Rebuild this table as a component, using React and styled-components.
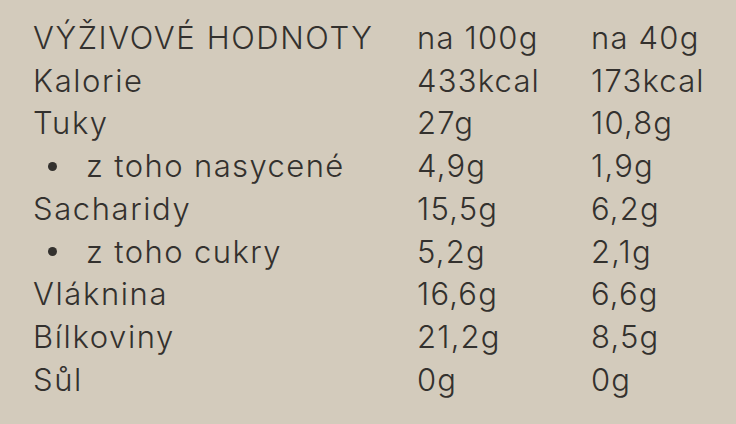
import React from 'react';
import styled, { createGlobalStyle } from 'styled-components';

const GlobalStyle = createGlobalStyle`
    html, body {
        margin: 0;
        padding: 0;
        background: #d3cbbc;
    }
`;

const rows = [
    { name: 'VÝŽIVOVÉ HODNOTY', per100: 'na 100g', perPortion: 'na 40g' },
    { name: 'Kalorie', per100: '433kcal', perPortion: '173kcal' },
    { name: 'Tuky', per100: '27g', perPortion: '10,8g' },
    { name: 'z toho nasycené', per100: '4,9g', perPortion: '1,9g', sub: true },
    { name: 'Sacharidy', per100: '15,5g', perPortion: '6,2g' },
    { name: 'z toho cukry', per100: '5,2g', perPortion: '2,1g', sub: true },
    { name: 'Vláknina', per100: '16,6g', perPortion: '6,6g' },
    { name: 'Bílkoviny', per100: '21,2g', perPortion: '8,5g' },
    { name: 'Sůl', per100: '0g', perPortion: '0g' },
];

const NutritionTable = () => {
    return (
        <TableStyled>
            {rows.map((row) => (
                <Row key={row.name}>
                    <Label $sub={row.sub}>
                        {row.sub && <Bullet />}
                        {row.name}
                    </Label>
                    <Value>{row.per100}</Value>
                    <Value>{row.perPortion}</Value>
                </Row>
            ))}
        </TableStyled>
    );
}

const App = () => (
    <>
        <GlobalStyle />
        <NutritionTable />
    </>
);

export default App;

const TableStyled = styled.div`
    display: flex;
    flex-direction: column;
    padding: 17px 0 0 33px;
    font-family: Inter, "Liberation Sans", sans-serif;
    font-size: 31px;
    font-weight: 350;
    letter-spacing: 1.6px;
    line-height: 42.7px;
    color: #33312e;
`;

const Row = styled.div`
    display: grid;
    grid-template-columns: 384px 174px auto;
    white-space: nowrap;
`;

const Label = styled.div`
    display: flex;
    align-items: center;
    padding-left: ${({ $sub }) => ($sub ? '15px' : '0')};
    letter-spacing: ${({ $sub }) => ($sub ? '1.4px' : 'inherit')};
`;

const Bullet = styled.span`
    width: 9px;
    height: 9px;
    border-radius: 50%;
    background: #33312e;
    margin-right: 29px;
`;

const Value = styled.div`
    letter-spacing: 1.2px;
`;
